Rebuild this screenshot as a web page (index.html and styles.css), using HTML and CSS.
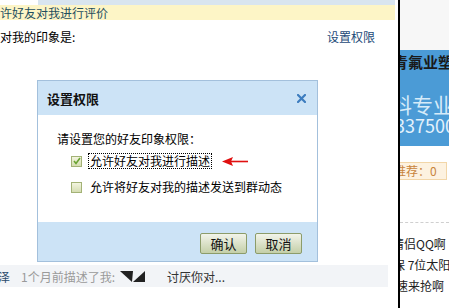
FILE: index.html
```html
<!DOCTYPE html>
<html lang="zh-CN">
<head>
  <meta charset="UTF-8" />
  <title>设置权限</title>
  <link rel="stylesheet" href="styles.css">
</head>
<body>
<div class="page">
  <div class="main">
    <div class="topbar"></div>
    <div class="notice">许好友对我进行评价</div>
    <div class="impress-row">
      <span>对我的印象是:</span>
      <a class="link" href="#">设置权限</a>
    </div>
    <div class="desc-row">
      <span class="desc-name">泽</span>
      <span class="desc-time">1个月前描述了我:</span>
      <svg class="desc-mark" width="25" height="11" viewBox="0 0 25 11">
        <polygon points="0,0 13,0 12,11" fill="#222"/>
        <polygon points="13,11 25,0 25,11" fill="#222"/>
      </svg>
      <span class="desc-text">讨厌你对...</span>
    </div>
  </div>

  <div class="side">
    <div class="side-top"></div>
    <div class="banner">
      <div class="banner-l1">青氟业塑料</div>
      <div class="banner-l2">科专业</div>
      <div class="banner-l3">337500</div>
    </div>
    <div class="recommend">推荐：0</div>
    <div class="side-list">
      <div class="side-item item1">情侣QQ啊</div>
      <div class="side-item item2">保 7位太阳</div>
      <div class="side-item item3">速来抢啊</div>
    </div>
  </div>

  <!-- permission dialog, floats over the page -->
  <div class="dialog">
    <div class="dlg-head">
      <span class="dlg-title">设置权限</span>
      <svg class="dlg-close" width="9" height="9" viewBox="0 0 9 9">
        <path d="M1 1 L8 8 M8 1 L1 8" stroke="#3d7dbf" stroke-width="2.2" stroke-linecap="square"/>
      </svg>
    </div>
    <div class="dlg-body">
      <div class="dlg-intro">请设置您的好友印象权限：</div>
      <div class="opt opt-first">
        <span class="check checked">
          <svg width="8" height="8" viewBox="0 0 8 8">
            <path d="M1 4 L3 6.5 L7 1" fill="none" stroke="#6aa334" stroke-width="1.6"/>
          </svg>
        </span>
        <span class="opt-label focused">允许好友对我进行描述</span>
        <svg class="arrow" width="26" height="9" viewBox="0 0 26 9">
          <polygon points="0,4.5 11,0 9,4.5 11,9" fill="#e01010"/>
          <line x1="9" y1="4.5" x2="26" y2="4.5" stroke="#e01010" stroke-width="1.6"/>
        </svg>
      </div>
      <div class="opt opt-second">
        <span class="check"></span>
        <span class="opt-label">允许将好友对我的描述发送到群动态</span>
      </div>
    </div>
    <div class="dlg-foot">
      <button class="btn">确认</button>
      <button class="btn">取消</button>
    </div>
  </div>
</div>
</body>
</html>
```

FILE: styles.css
```css
body {
  margin: 0;
  font-family: "Noto Sans CJK SC", "Liberation Sans", sans-serif;
  font-size: 12px;
  color: #000;
  background: #fff;
}
.page {
  position: relative;
  display: flex;
  width: 449px;
  height: 308px;
  overflow: hidden;
}
.main {
  width: 398px;
  flex-shrink: 0;
}
.topbar {
  height: 5px;
  margin: 0 3px 0 38px;
  background: #d9e5ef;
}
.notice {
  height: 15px;
  line-height: 15px;
  margin-right: 3px;
  background: #fdf5c6;
  color: #1f4f5e;
  white-space: nowrap;
}
.impress-row {
  display: flex;
  justify-content: space-between;
  height: 18px;
  line-height: 18px;
  margin-top: 8px;
  padding-right: 23px;
}
.link {
  color: #1c4a78;
  text-decoration: none;
}
.desc-row {
  display: flex;
  align-items: center;
  width: 388px;
  height: 22px;
  margin-top: 219px;
  background: #f2f4f7;
  white-space: nowrap;
}
.desc-name {
  margin-left: -2px;
  color: #2a4b6b;
}
.desc-time {
  margin-left: 11px;
  color: #9a9a9a;
}
.desc-mark {
  margin-left: 5px;
}
.desc-text {
  margin-left: 22px;
  color: #333;
}

/* right hand column, clipped at the window edge */
.side {
  flex: 1;
  border-left: 2px solid #000;
  overflow: hidden;
  white-space: nowrap;
}
.side-top {
  height: 50px;
  background: #f7f7f7;
}
.banner {
  height: 96px;
  background: #4b9bd6;
  overflow: hidden;
}
.banner-l1 {
  margin: 3px 0 0 -7px;
  font-size: 15px;
  line-height: 18px;
  font-weight: bold;
  color: #1a1a1a;
}
.banner-l2 {
  margin: 22px 0 0 -9px;
  font-size: 21px;
  line-height: 22px;
  color: #d6ebf9;
}
.banner-l3 {
  margin: 2px 0 0 -5px;
  font-size: 18px;
  line-height: 17px;
  color: #e4f2fc;
}
.recommend {
  width: 52px;
  height: 16px;
  line-height: 16px;
  margin: 16px 0 0 -10px;
  padding-left: 3px;
  border: 1px solid #f2d6a8;
  background: #fdf2e0;
  color: #c8843c;
}
.side-list {
  margin-top: 42px;
  padding-top: 10px;
  border-top: 1px dashed #cfcfcf;
}
.side-item {
  line-height: 21px;
  color: #222;
}
.item1 { margin-left: -8px; }
.item2 { margin-left: -7px; }
.item3 { margin-left: -4px; }

/* dialog */
.dialog {
  position: absolute;
  left: 37px;
  top: 80px;
  width: 279px;
  border: 1px solid #a3c0dc;
  background: #fff;
}
.dlg-head {
  display: flex;
  align-items: center;
  justify-content: space-between;
  height: 34px;
  padding: 0 11px 0 9px;
  background: #cce3f6;
}
.dlg-title {
  font-size: 13px;
  font-weight: bold;
  color: #111;
}
.dlg-body {
  height: 91px;
  padding: 16px 0 0 19px;
}
.dlg-intro {
  line-height: 16px;
}
.opt {
  display: flex;
  align-items: center;
  height: 16px;
  padding-left: 14px;
}
.opt-first {
  margin-top: 6px;
}
.opt-second {
  margin-top: 10px;
}
.check {
  display: flex;
  align-items: center;
  justify-content: center;
  width: 9px;
  height: 9px;
  border: 1px solid #a3b276;
  background: linear-gradient(#f3f5e0, #d5ddb2);
}
.opt-label {
  margin-left: 6px;
  line-height: 14px;
  padding: 0 1px;
  border: 1px solid transparent;
}
.focused {
  border: 1px dotted #000;
}
.arrow {
  margin-left: 10px;
}
.dlg-foot {
  display: flex;
  justify-content: flex-end;
  align-items: flex-start;
  gap: 8px;
  height: 28px;
  padding: 11px 15px 0 0;
  background: #cce3f6;
}
.btn {
  width: 47px;
  height: 21px;
  padding: 0;
  border: 1px solid #8c9c6a;
  border-radius: 2px;
  background: linear-gradient(#f2f4ea, #c4cfa8);
  font-family: "Noto Sans CJK SC", sans-serif;
  font-size: 13px;
  line-height: 19px;
  color: #111;
}
```
